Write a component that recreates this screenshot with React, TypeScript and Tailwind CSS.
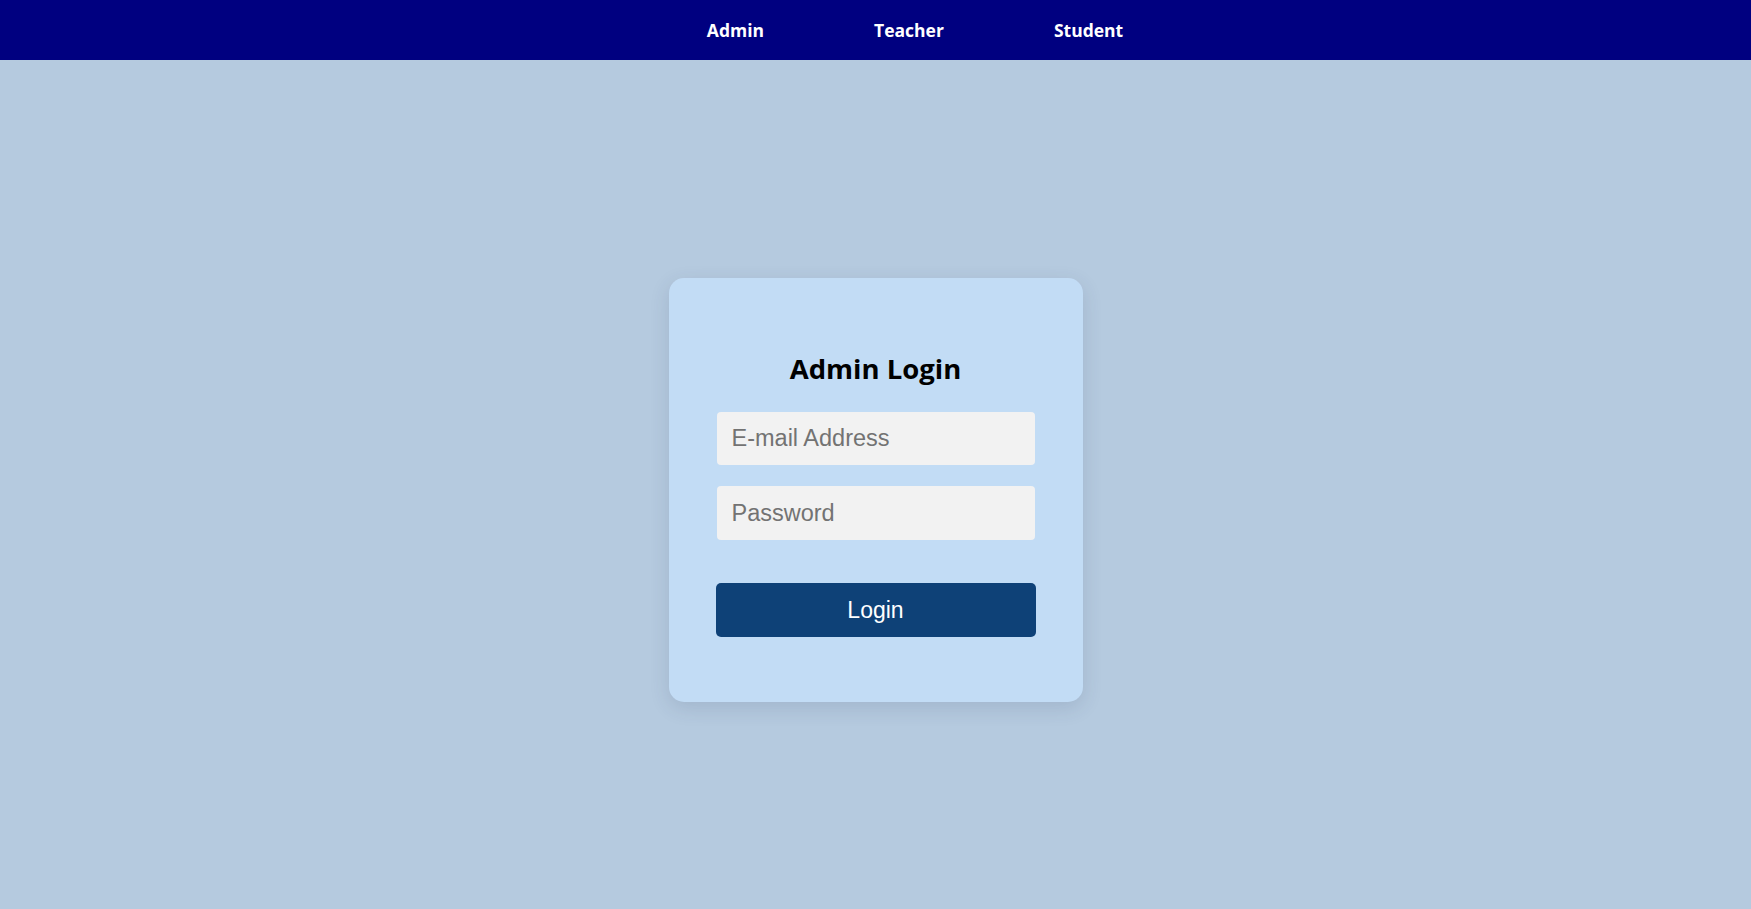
import { useState } from 'react';

const navLinks = ['Admin', 'Teacher', 'Student'];

export default function App() {
  const [email, setEmail] = useState('');
  const [password, setPassword] = useState('');

  return (
    <div className="min-h-[909px] bg-[#b5cadf] font-['Liberation_Sans',Arial,sans-serif]">
      <nav className="flex h-[60px] items-center justify-center gap-[110px] bg-[#000080] pl-[79px]">
        {navLinks.map((link) => (
          <a
            key={link}
            href="#"
            className="font-['Open_Sans',sans-serif] text-[17.5px] font-bold text-white"
          >
            {link}
          </a>
        ))}
      </nav>

      <main className="flex justify-center pt-[218px]">
        <form
          className="flex h-[424px] w-[414px] flex-col items-center rounded-[15px] bg-[#c2dcf5] px-[48px] pt-[74px] shadow-[0_6px_20px_rgba(40,60,90,0.14)]"
          onSubmit={(event) => event.preventDefault()}
        >
          <h2 className="font-['Open_Sans',sans-serif] text-[27.5px] leading-[34px] font-bold text-black">
            Admin Login
          </h2>
          <input
            className="mt-[26px] h-[53px] w-[318px] rounded-[4px] bg-[#f2f2f2] px-[15px] text-[23.5px] text-[#333] outline-none placeholder:text-[#737373]"
            placeholder="E-mail Address"
            value={email}
            onChange={(event) => setEmail(event.target.value)}
          />
          <input
            type="password"
            className="mt-[21px] h-[54px] w-[318px] rounded-[4px] bg-[#f2f2f2] px-[15px] text-[23.5px] text-[#333] outline-none placeholder:text-[#737373]"
            placeholder="Password"
            value={password}
            onChange={(event) => setPassword(event.target.value)}
          />
          <button
            type="submit"
            className="mt-[43px] h-[54px] w-[320px] rounded-[5px] bg-[#0e4177] text-[23px] text-white"
          >
            Login
          </button>
        </form>
      </main>
    </div>
  );
}
